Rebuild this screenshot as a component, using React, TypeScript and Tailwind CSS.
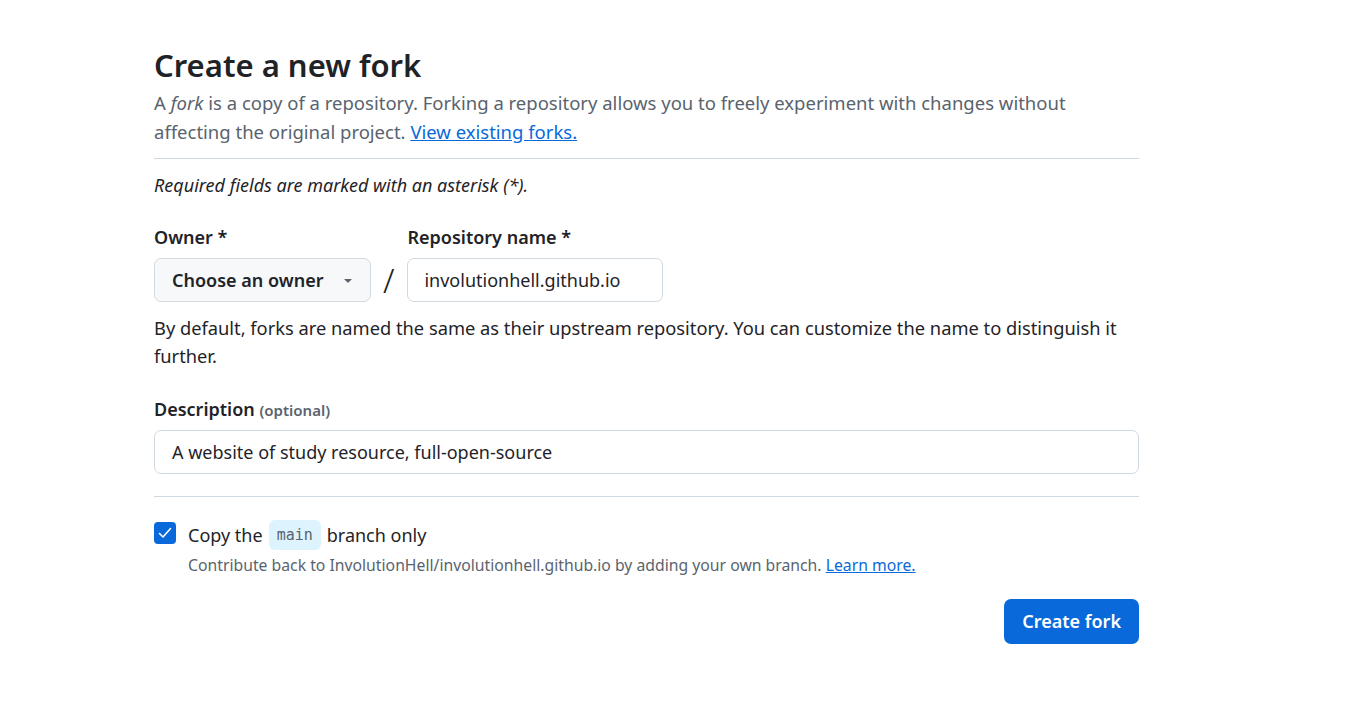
import React from "react";

const font = { fontFamily: '"Noto Sans", "Liberation Sans", sans-serif' };

function Caret() {
  return (
    <svg width="16" height="16" viewBox="0 0 16 16" className="fill-[#59636e]">
      <path d="m4.427 7.427 3.396 3.396a.25.25 0 0 0 .354 0l3.396-3.396A.25.25 0 0 0 11.396 7H4.604a.25.25 0 0 0-.177.427Z" />
    </svg>
  );
}

function Check() {
  return (
    <svg width="16" height="16" viewBox="0 0 16 16" fill="none">
      <path d="M2.5 8.5l3.5 3.5 7.5-8.5" stroke="white" strokeWidth="1.6" strokeLinecap="round" strokeLinejoin="round" />
    </svg>
  );
}

export default function App() {
  return (
    <div className="min-h-screen bg-white text-[#1f2328] pl-[154px] pt-[41px]" style={font}>
      <div className="w-[985px]">
        {/* Header */}
        <h1 className="text-[31px] leading-[48px] font-semibold">Create a new fork</h1>
        <p className="-mt-[1px] text-[18.5px] leading-[29px] text-[#59636e]">
          A <em>fork</em> is a copy of a repository. Forking a repository allows you to freely experiment with changes without
          affecting the original project.{" "}
          <a href="#" className="text-[#0969da] underline">View existing forks.</a>
        </p>
        <div className="mt-[12px] border-t border-[#d1d9e0]" />

        <p className="mt-[12px] text-[18px] leading-[28px] italic">Required fields are marked with an asterisk (*).</p>

        {/* Owner / repo */}
        <div className="mt-[24px] flex items-end gap-[12px]">
          <div className="flex flex-col gap-[7px]">
            <label className="text-[18px] leading-[28px] font-semibold">Owner *</label>
            <button className="h-[44px] w-[217px] flex items-center justify-between pl-[17px] pr-[14px] rounded-[7px] border border-[#d1d9e0] bg-[#f6f8fa] text-[18px] font-semibold">
              Choose an owner
              <Caret />
            </button>
          </div>
          <div className="h-[44px] mr-[1px] flex items-center text-[33px] font-light leading-none text-[#1f2328]">/</div>
          <div className="flex flex-col gap-[7px]">
            <label className="text-[18px] leading-[28px] font-semibold">Repository name *</label>
            <div className="h-[44px] w-[256px] flex items-center px-[16px] rounded-[7px] border border-[#d1d9e0] text-[18px]">
              involutionhell.github.io
            </div>
          </div>
        </div>

        <p className="mt-[12px] text-[18.3px] leading-[28px]">
          By default, forks are named the same as their upstream repository. You can customize the name to distinguish it further.
        </p>

        {/* Description */}
        <div className="mt-[25px] flex flex-col gap-[6px]">
          <label className="text-[18px] leading-[28px] font-semibold">
            Description <span className="text-[15px] text-[#59636e]">(optional)</span>
          </label>
          <div className="h-[44px] flex items-center px-[17px] rounded-[7px] border border-[#d1d9e0] text-[18px]">
            A website of study resource, full-open-source
          </div>
        </div>

        <div className="mt-[22px] border-t border-[#d1d9e0]" />

        {/* Copy main branch */}
        <div className="mt-[23px] flex gap-[12px]">
          <div className="mt-[2px] w-[22px] h-[22px] rounded-[4px] bg-[#0969da] flex items-center justify-center">
            <Check />
          </div>
          <div className="flex flex-col">
            <div className="h-[30px] flex items-center gap-[6px] text-[18px]">
              Copy the
              <code className="px-[8px] h-[30px] flex items-center rounded-[6px] bg-[#ddf4ff] text-[#59636e] text-[15px]" style={{ fontFamily: '"DejaVu Sans Mono", monospace' }}>main</code>
              branch only
            </div>
            <p className="mt-[4px] text-[15.75px] leading-[22px] text-[#59636e]">
              Contribute back to InvolutionHell/involutionhell.github.io by adding your own branch.{" "}
              <a href="#" className="text-[#0969da] underline">Learn more.</a>
            </p>
          </div>
        </div>

        <div className="mt-[23px] flex justify-end">
          <button className="h-[45px] px-[18px] rounded-[7px] bg-[#0969da] text-white text-[18px] font-semibold">Create fork</button>
        </div>
      </div>
    </div>
  );
}
